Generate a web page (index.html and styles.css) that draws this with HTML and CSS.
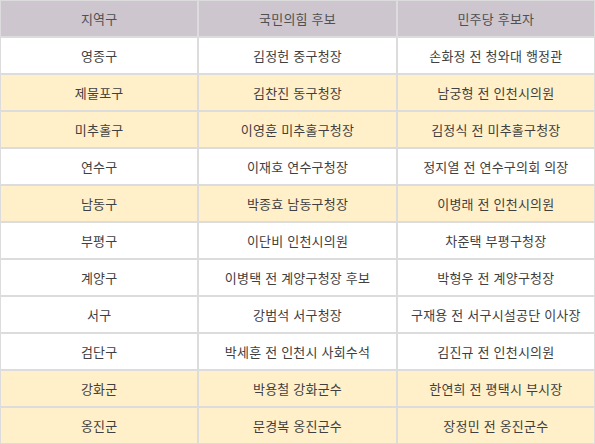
FILE: index.html
```html
<!DOCTYPE html>
<html lang="ko">
<head>
<meta charset="utf-8">
<title>인천 후보</title>
<link rel="stylesheet" href="styles.css">
</head>
<body>
<table class="cand">
  <thead>
    <tr><th>지역구</th><th>국민의힘 후보</th><th>민주당 후보자</th></tr>
  </thead>
  <tbody>
    <tr><td>영종구</td><td>김정헌 중구청장</td><td>손화정 전 청와대 행정관</td></tr>
    <tr class="hl"><td>제물포구</td><td>김찬진 동구청장</td><td>남궁형 전 인천시의원</td></tr>
    <tr class="hl"><td>미추홀구</td><td>이영훈 미추홀구청장</td><td>김정식 전 미추홀구청장</td></tr>
    <tr><td>연수구</td><td>이재호 연수구청장</td><td>정지열 전 연수구의회 의장</td></tr>
    <tr class="hl"><td>남동구</td><td>박종효 남동구청장</td><td>이병래 전 인천시의원</td></tr>
    <tr><td>부평구</td><td>이단비 인천시의원</td><td>차준택 부평구청장</td></tr>
    <tr><td>계양구</td><td>이병택 전 계양구청장 후보</td><td>박형우 전 계양구청장</td></tr>
    <tr><td>서구</td><td>강범석 서구청장</td><td>구재용 전 서구시설공단 이사장</td></tr>
    <tr><td>검단구</td><td>박세훈 전 인천시 사회수석</td><td>김진규 전 인천시의원</td></tr>
    <tr class="hl"><td>강화군</td><td>박용철 강화군수</td><td>한연희 전 평택시 부시장</td></tr>
    <tr class="hl"><td>옹진군</td><td>문경복 옹진군수</td><td>장정민 전 옹진군수</td></tr>
  </tbody>
</table>
</body>
</html>
```
FILE: styles.css
```css
html, body {
  margin: 0;
  padding: 0;
  background: #ffffff;
}
body {
  font-family: "Noto Sans CJK KR", "Noto Sans", sans-serif;
  font-size: 13px;
  color: #404040;
}
.cand {
  width: 595px;
  border-collapse: separate;
  border-spacing: 0;
  table-layout: fixed;
}
.cand th,
.cand td {
  height: 37px;
  padding: 0 2px;
  border: 1px solid #dcdcdc;
  text-align: center;
  vertical-align: middle;
  line-height: 16px;
  letter-spacing: 0.2px;
  box-sizing: border-box;
}
.cand th {
  background: #cdc6cf;
  font-weight: normal;
  color: #505050;
}
.cand tr.hl td {
  background: #fff0c9;
}
```
